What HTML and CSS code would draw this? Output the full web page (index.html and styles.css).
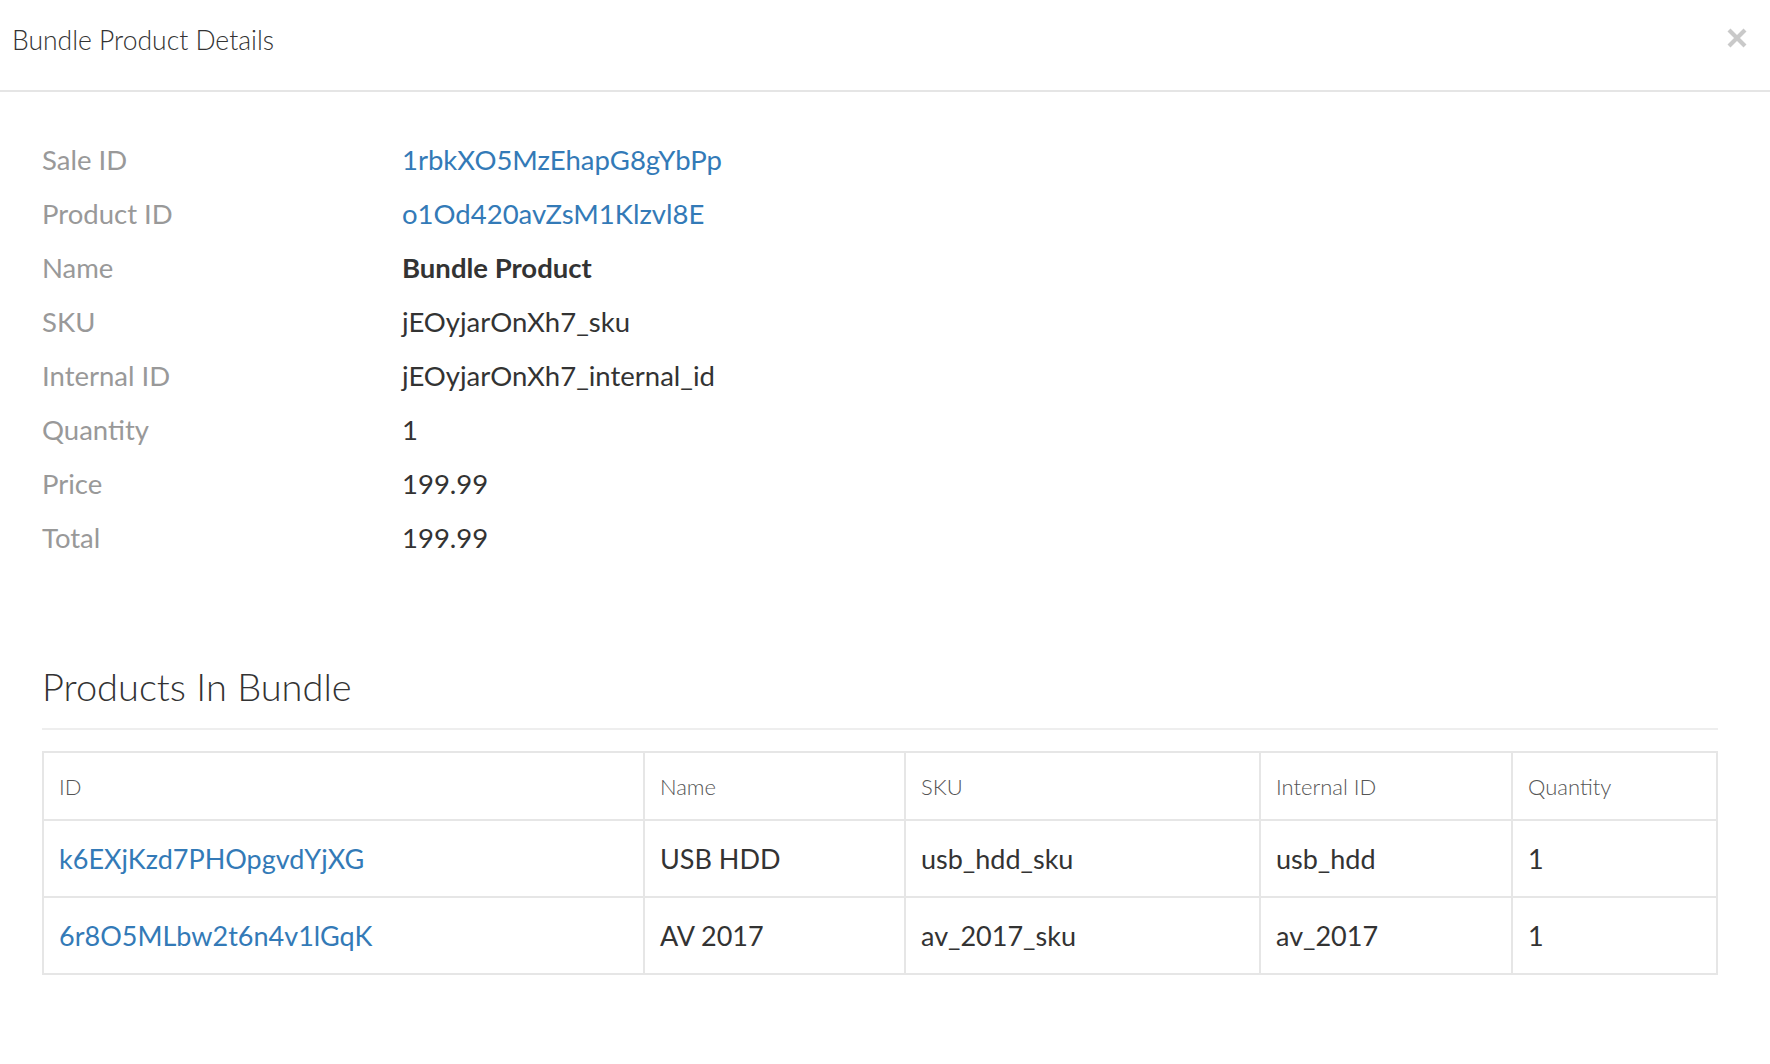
FILE: index.html
```html
<!DOCTYPE html>
<html lang="en">
<head>
    <meta charset="UTF-8">
    <meta name="viewport" content="width=device-width, initial-scale=1.0">
    <title>Bundle Product Details</title>
    <link rel="stylesheet" href="styles.css">
</head>
<body>
    <div class="modal">
        <div class="modal-header">
            <h4 class="modal-title">Bundle Product Details</h4>
            <button class="close" type="button" aria-label="Close">
                <svg width="20" height="20" viewBox="0 0 20 20">
                    <path d="M2 2 L18 18 M18 2 L2 18" stroke="#c9c9c9" stroke-width="4.2" fill="none"/>
                </svg>
            </button>
        </div>

        <div class="modal-body">
            <dl class="details">
                <dt>Sale ID</dt>
                <dd><a href="#">1rbkXO5MzEhapG8gYbPp</a></dd>
                <dt>Product ID</dt>
                <dd><a href="#">o1Od420avZsM1Klzvl8E</a></dd>
                <dt>Name</dt>
                <dd><strong>Bundle Product</strong></dd>
                <dt>SKU</dt>
                <dd>jEOyjarOnXh7_sku</dd>
                <dt>Internal ID</dt>
                <dd>jEOyjarOnXh7_internal_id</dd>
                <dt>Quantity</dt>
                <dd>1</dd>
                <dt>Price</dt>
                <dd>199.99</dd>
                <dt>Total</dt>
                <dd>199.99</dd>
            </dl>

            <h3 class="section-title">Products In Bundle</h3>

            <table class="bundle-table">
                <thead>
                    <tr>
                        <th class="col-id">ID</th>
                        <th class="col-name">Name</th>
                        <th class="col-sku">SKU</th>
                        <th class="col-internal">Internal ID</th>
                        <th>Quantity</th>
                    </tr>
                </thead>
                <tbody>
                    <tr>
                        <td><a href="#">k6EXjKzd7PHOpgvdYjXG</a></td>
                        <td>USB HDD</td>
                        <td>usb_hdd_sku</td>
                        <td>usb_hdd</td>
                        <td>1</td>
                    </tr>
                    <tr>
                        <td><a href="#">6r8O5MLbw2t6n4v1lGqK</a></td>
                        <td>AV 2017</td>
                        <td>av_2017_sku</td>
                        <td>av_2017</td>
                        <td>1</td>
                    </tr>
                </tbody>
            </table>
        </div>
    </div>
</body>
</html>
```

FILE: styles.css
```css
:root {
    --text-main: #333333;
    --text-dim: #999999;
    --link: #337ab7;
    --border: #e6e6e6;
}

body {
    font-family: 'Lato', 'Liberation Sans', sans-serif;
    color: var(--text-main);
    background-color: #ffffff;
    margin: 0;
    padding: 0;
}

a {
    color: var(--link);
    text-decoration: none;
}

.modal-header {
    height: 90px;
    padding: 0 12px;
    border-bottom: 2px solid #e5e5e5;
    display: flex;
    justify-content: space-between;
    align-items: center;
}

.modal-title {
    margin: 0;
    margin-top: -11px;
    font-size: 26.5px;
    font-weight: 300;
    color: #333;
}

.close {
    background: none;
    border: none;
    padding: 0;
    margin-right: 11px;
    margin-top: -15px;
    cursor: pointer;
    display: flex;
}

.modal-body {
    padding: 40px 52px 40px 42px;
}

.details {
    display: grid;
    grid-template-columns: 360px 1fr;
    grid-auto-rows: 54px;
    align-items: center;
    margin: 0;
    font-size: 27.5px;
}

.details dt {
    color: var(--text-dim);
}

.details dd {
    margin: 0;
}

.details strong {
    font-weight: 700;
}

.section-title {
    margin: 99px 0 0;
    padding-bottom: 19px;
    border-bottom: 2px solid #eeeeee;
    font-size: 38px;
    font-weight: 300;
    line-height: 46px;
}

.bundle-table {
    width: 100%;
    margin-top: 21px;
    table-layout: fixed;
    border-collapse: collapse;
    border: 2px solid var(--border);
}

.bundle-table th,
.bundle-table td {
    border: 2px solid var(--border);
    padding: 0 15px;
    text-align: left;
}

.bundle-table th {
    height: 66px;
    font-size: 22px;
    font-weight: 300;
    color: #555;
}

.bundle-table td {
    height: 75px;
    font-size: 27px;
}

.col-id { width: 569px; }
.col-name { width: 229px; }
.col-sku { width: 323px; }
.col-internal { width: 220px; }
```
